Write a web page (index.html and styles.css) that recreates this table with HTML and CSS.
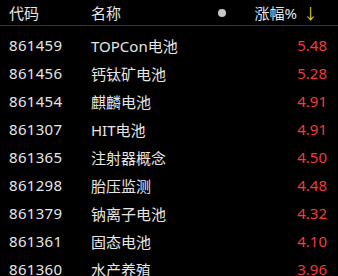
FILE: index.html
```html
<!DOCTYPE html>
<html lang="zh">
<head>
<meta charset="utf-8">
<link rel="stylesheet" href="styles.css">
</head>
<body>
<div class="table">
  <div class="head">
    <span class="c-code">代码</span>
    <span class="c-name">名称</span>
    <span class="dot"></span>
    <span class="c-chg">涨幅%<span class="arrow">↓</span></span>
  </div>
  <div class="rows">
    <div class="row"><span class="c-code">861459</span><span class="c-name">TOPCon电池</span><span class="c-val">5.48</span></div>
    <div class="row"><span class="c-code">861456</span><span class="c-name">钙钛矿电池</span><span class="c-val">5.28</span></div>
    <div class="row"><span class="c-code">861454</span><span class="c-name">麒麟电池</span><span class="c-val">4.91</span></div>
    <div class="row"><span class="c-code">861307</span><span class="c-name">HIT电池</span><span class="c-val">4.91</span></div>
    <div class="row"><span class="c-code">861365</span><span class="c-name">注射器概念</span><span class="c-val">4.50</span></div>
    <div class="row"><span class="c-code">861298</span><span class="c-name">胎压监测</span><span class="c-val">4.48</span></div>
    <div class="row"><span class="c-code">861379</span><span class="c-name">钠离子电池</span><span class="c-val">4.32</span></div>
    <div class="row"><span class="c-code">861361</span><span class="c-name">固态电池</span><span class="c-val">4.10</span></div>
    <div class="row"><span class="c-code">861360</span><span class="c-name">水产养殖</span><span class="c-val">3.96</span></div>
  </div>
</div>
</body>
</html>
```
FILE: styles.css
```css
html, body {
  margin: 0;
  padding: 0;
  background: #000;
  overflow: hidden;
}
.table {
  width: 338px;
  font-family: "Noto Sans", "Noto Sans CJK SC", sans-serif;
  font-size: 15px;
  color: #e6e6e6;
}
.head {
  display: flex;
  align-items: center;
  height: 25px;
  border-bottom: 1px solid #333;
}
.rows {
  padding-top: 5px;
}
.row {
  display: flex;
  align-items: center;
  height: 28px;
}
.c-code {
  width: 82px;
  padding-left: 9px;
}
.row .c-code {
  letter-spacing: 0.3px;
}
.c-name {
  flex: 1;
}
.dot {
  width: 8px;
  height: 8px;
  border-radius: 50%;
  background: #c8c8c8;
  margin-right: 29px;
}
.c-chg {
  padding-right: 20px;
  color: #dfe6ee;
}
.arrow {
  color: #e8d400;
  margin-left: 6px;
}
.c-val {
  color: #f23a3a;
  padding-right: 11px;
}
```
